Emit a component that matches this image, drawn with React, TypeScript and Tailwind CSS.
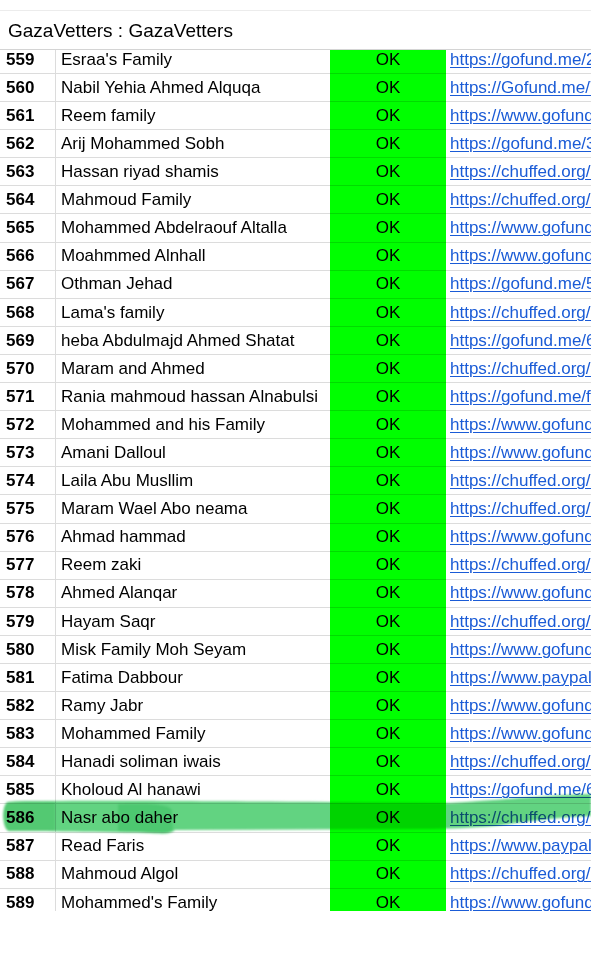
const ROWS: [number, string, string][] = [
  [559, "Esraa's Family", "https://gofund.me/2a81c4fe"],
  [560, "Nabil Yehia Ahmed Alquqa", "https://Gofund.me/7b3e"],
  [561, "Reem family", "https://www.gofundme.com/f/"],
  [562, "Arij Mohammed Sobh", "https://gofund.me/3c9d"],
  [563, "Hassan riyad shamis", "https://chuffed.org/project/"],
  [564, "Mahmoud Family", "https://chuffed.org/project/"],
  [565, "Mohammed Abdelraouf Altalla", "https://www.gofundme.com/f/"],
  [566, "Moahmmed Alnhall", "https://www.gofundme.com/f/"],
  [567, "Othman Jehad", "https://gofund.me/5e0a"],
  [568, "Lama's family", "https://chuffed.org/project/"],
  [569, "heba Abdulmajd Ahmed Shatat", "https://gofund.me/6f1b"],
  [570, "Maram and Ahmed", "https://chuffed.org/project/"],
  [571, "Rania mahmoud hassan Alnabulsi", "https://gofund.me/f2c0"],
  [572, "Mohammed and his Family", "https://www.gofundme.com/f/"],
  [573, "Amani Dalloul", "https://www.gofundme.com/f/"],
  [574, "Laila Abu Musllim", "https://chuffed.org/project/"],
  [575, "Maram Wael Abo neama", "https://chuffed.org/project/"],
  [576, "Ahmad hammad", "https://www.gofundme.com/f/"],
  [577, "Reem zaki", "https://chuffed.org/project/"],
  [578, "Ahmed Alanqar", "https://www.gofundme.com/f/"],
  [579, "Hayam Saqr", "https://chuffed.org/project/"],
  [580, "Misk Family Moh Seyam", "https://www.gofundme.com/f/"],
  [581, "Fatima Dabbour", "https://www.paypal.com/"],
  [582, "Ramy Jabr", "https://www.gofundme.com/f/"],
  [583, "Mohammed Family", "https://www.gofundme.com/f/"],
  [584, "Hanadi soliman iwais", "https://chuffed.org/project/"],
  [585, "Kholoud Al hanawi", "https://gofund.me/6d4a"],
  [586, "Nasr abo daher", "https://chuffed.org/project/"],
  [587, "Read Faris", "https://www.paypal.com/"],
  [588, "Mahmoud Algol", "https://chuffed.org/project/"],
  [589, "Mohammed's Family", "https://www.gofundme.com/f/"],
];

function Row({ n, name, link, idx }: { n: number; name: string; link: string; idx: number }) {
  const first = idx === 0;
  const last = idx === ROWS.length - 1;
  const h = first ? "h-[24px]" : last ? "h-[22px]" : "h-[28.1px]";
  const pad = first ? "pb-1" : last ? "pt-1.5" : "";
  const line = last ? "" : "border-b";
  return (
    <div className={`flex ${h} shrink-0`}>
      <div className={`w-[56px] shrink-0 flex items-center pl-[6px] font-bold border-r border-[#dcdcdc] ${line} ${pad}`}>
        {n}
      </div>
      <div className={`w-[274px] shrink-0 flex items-center pl-[5px] whitespace-nowrap border-[#dcdcdc] ${line} ${pad}`}>
        {name}
      </div>
      <div className={`w-[116px] shrink-0 flex items-center justify-center bg-[#00ff00] border-[#00dc00] ${line} ${pad}`}>
        OK
      </div>
      <div className={`flex-1 min-w-0 flex items-center pl-[4px] whitespace-nowrap overflow-hidden border-[#dcdcdc] ${line} ${pad}`}>
        <span className="text-[#1a5bd6] underline decoration-1 underline-offset-2">{link}</span>
      </div>
    </div>
  );
}

export default function App() {
  return (
    <div className="relative w-[591px] h-[960px] overflow-hidden bg-white text-black font-['Liberation_Sans',Arial,sans-serif]">
      <div className="h-[10px]" />
      <div className="h-px bg-[#ececec]" />
      <div className="h-[38px] flex items-center pl-[8px] pt-[2px] text-[19px]">GazaVetters : GazaVetters</div>
      <div className="flex flex-col border-t border-[#d4d4d4] text-[17px]">
        {ROWS.map(([n, name, link], i) => (
          <Row key={n} n={n} name={name} link={link} idx={i} />
        ))}
      </div>

      {/* marker stroke over row 586 */}
      <svg
        className="absolute left-0 top-[790px] pointer-events-none mix-blend-multiply"
        width="591"
        height="50"
        viewBox="0 0 591 50"
      >
        <defs>
          <filter id="soft" x="-5%" y="-20%" width="110%" height="140%">
            <feGaussianBlur stdDeviation="0.9" />
          </filter>
        </defs>
        <g filter="url(#soft)">
          <path
            d="M 8 12 C 60 10, 160 11, 330 12 L 450 13 C 500 10, 550 5, 591 4 L 591 26 C 560 27, 530 31, 495 36 C 470 38, 450 39, 420 39 L 175 40 C 172 43, 166 44, 158 43 C 100 42, 40 41, 9 41 C 2 40, 1 14, 8 12 Z"
            fill="#62d381"
          />
          <path d="M 118 14 C 150 13, 168 14, 172 20 L 173 39 C 171 44, 160 44, 140 42 L 118 41 Z" fill="#4ec86f" />
          <path d="M 8 12 C 20 11, 40 11, 55 12 L 55 41 C 35 41, 15 41, 9 41 C 2 38, 2 15, 8 12 Z" fill="#52c972" />
        </g>
      </svg>
    </div>
  );
}
